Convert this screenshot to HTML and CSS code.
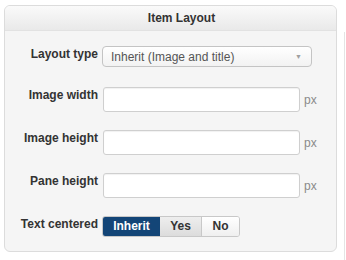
FILE: index.html
```html
<!DOCTYPE html>
<html>
	<head>
		<meta charset="utf-8" />
		<title>Item Layout</title>
		<link rel="stylesheet" href="styles.css">
	</head>
	<body>
		<div class="panel">
			<div class="panel-head">Item Layout</div>
			<div class="panel-body">
				<div class="row row-select">
					<label class="lbl">Layout type</label>
					<div class="select">
						<span>Inherit (Image and title)</span>
						<i class="caret">▼</i>
					</div>
				</div>
				<div class="row">
					<label class="lbl">Image width</label>
					<input class="field" type="text">
					<span class="unit">px</span>
				</div>
				<div class="row">
					<label class="lbl">Image height</label>
					<input class="field" type="text">
					<span class="unit">px</span>
				</div>
				<div class="row">
					<label class="lbl">Pane height</label>
					<input class="field" type="text">
					<span class="unit">px</span>
				</div>
				<div class="row row-toggle">
					<label class="lbl">Text centered</label>
					<div class="toggle">
						<a href="javascript:;" class="on">Inherit</a>
						<a href="javascript:;" class="mid">Yes</a>
						<a href="javascript:;">No</a>
					</div>
				</div>
			</div>
		</div>
		<div class="next-panel"></div>
	</body>
</html>
```

FILE: styles.css
```css
* {
	padding: 0;
	margin: 0;
	box-sizing: border-box;
}
body {
	display: flex;
	align-items: flex-start;
	background-color: #ffffff;
	font-family: "Liberation Sans", Arial, sans-serif;
	font-size: 12px;
	color: #333;
}
a {
	text-decoration: none;
}
.panel {
	margin: 5px 0 0 4px;
	width: 333px;
	height: 247px;
	border: 1px solid #dcdcdc;
	border-radius: 6px;
	background-color: #f5f5f5;
	overflow: hidden;
}
.panel-head {
	height: 25px;
	line-height: 24px;
	padding-left: 22px;
	text-align: center;
	font-weight: bold;
	color: #333;
	border-bottom: 1px solid #e2e2e2;
	background: linear-gradient(#fafafa, #e9e9e9);
}
.panel-body {
	padding-top: 15px;
}
.row {
	display: flex;
	align-items: center;
	margin-bottom: 18px;
}
.row-select {
	margin-bottom: 20px;
}
.lbl {
	align-self: flex-start;
	width: 93px;
	margin-right: 5px;
	line-height: 16px;
	text-align: right;
	font-weight: bold;
	color: #333;
}
.select {
	display: flex;
	align-items: center;
	justify-content: space-between;
	width: 210px;
	height: 21px;
	margin-left: -1px;
	padding: 0 9px 0 8px;
	border: 1px solid #c4c4c4;
	border-radius: 4px;
	background: linear-gradient(#ffffff, #f2f2f2);
	color: #555;
}
.caret {
	font-style: normal;
	font-size: 7px;
	color: #a0a0a0;
}
.field {
	width: 197px;
	height: 25px;
	border: 1px solid #cfcfcf;
	border-radius: 3px;
	background-color: #ffffff;
	box-shadow: inset 0 1px 1px rgba(0, 0, 0, 0.06);
}
.unit {
	margin-left: 4px;
	margin-top: 1px;
	color: #8a8a8a;
}
.toggle {
	display: flex;
	height: 21px;
	margin-left: -1px;
	border: 1px solid #c8c8c8;
	border-radius: 3px;
	overflow: hidden;
}
.toggle a {
	display: block;
	width: 37px;
	line-height: 19px;
	text-align: center;
	font-weight: bold;
	color: #333;
	background: linear-gradient(#ffffff, #efefef);
}
.toggle a.on {
	width: 57px;
	color: #ffffff;
	background-color: #134577;
	background-image: none;
}
.toggle a.mid {
	width: 42px;
	border-right: 1px solid #c8c8c8;
	background: linear-gradient(#eeeeee, #dcdcdc);
}
.next-panel {
	margin: 32px 0 0 7px;
	width: 1px;
	height: 230px;
	background-color: #e4e4e4;
}
```
